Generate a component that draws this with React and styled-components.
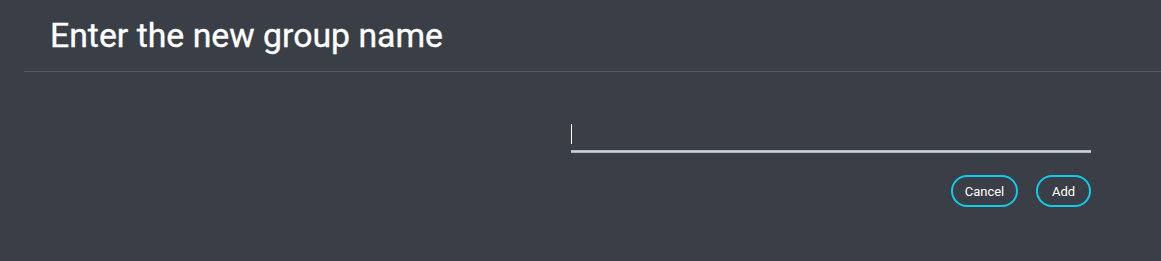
import styled, { createGlobalStyle } from "styled-components";

const Global = createGlobalStyle`
  html, body {
    margin: 0;
    background: #3a3e46;
  }
  body {
    font-family: Roboto, "Liberation Sans", sans-serif;
  }
`;

const Dialog = styled.div`
  width: 1161px;
  height: 261px;
  background: #3a3e46;
  color: #fff;
  box-sizing: border-box;
  padding-left: 24px;
`;

const Header = styled.div`
  height: 72px;
  box-sizing: border-box;
  padding: 16px 0 0 26px;
  border-bottom: 1px solid #565b63;
`;

const Title = styled.h1`
  margin: 0;
  font-size: 33.8px;
  font-weight: 400;
  line-height: 40px;
  letter-spacing: 0;
  -webkit-text-stroke: 0.35px #fff;
`;

const Body = styled.div`
  display: flex;
  flex-direction: column;
  align-items: flex-end;
  padding: 51px 70px 0 0;
`;

const Field = styled.div`
  width: 520px;
  display: flex;
  flex-direction: column;
`;

const InputRow = styled.div`
  height: 26px;
  display: flex;
  align-items: flex-start;
  padding-top: 1px;
`;

const Caret = styled.span`
  width: 1px;
  height: 20px;
  background: #fff;
`;

const Underline = styled.div`
  height: 3px;
  background: linear-gradient(#b2bec1 0 1px, #d0d0d0 1px 2px, #a9bbbf 2px 3px);
`;

const Actions = styled.div`
  display: flex;
  gap: 18px;
  margin-top: 22px;
`;

const Button = styled.button`
  height: 32px;
  width: ${(p) => p.$w}px;
  border: 2px solid #12cbea;
  border-radius: 16px;
  background: transparent;
  color: #fff;
  font-family: Roboto, "Liberation Sans", sans-serif;
  font-size: 13px;
  padding: 0;
  cursor: pointer;
`;

export default function App() {
  return (
    <>
      <Global />
      <Dialog>
        <Header>
          <Title>Enter the new group name</Title>
        </Header>
        <Body>
          <Field>
            <InputRow>
              <Caret />
            </InputRow>
            <Underline />
          </Field>
          <Actions>
            <Button $w={67}>Cancel</Button>
            <Button $w={55}>Add</Button>
          </Actions>
        </Body>
      </Dialog>
    </>
  );
}
